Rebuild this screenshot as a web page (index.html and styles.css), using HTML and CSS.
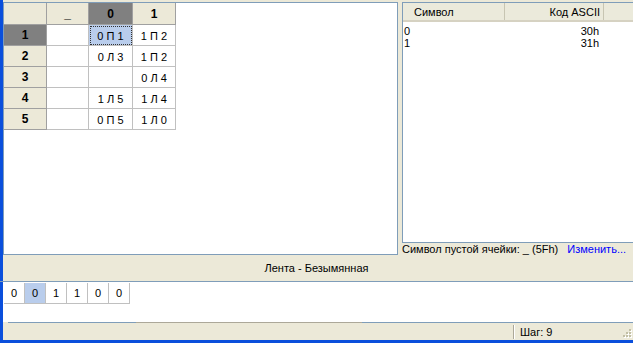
FILE: index.html
```html
<!DOCTYPE html>
<html>
<head>
<meta charset="utf-8">
<link rel="stylesheet" href="styles.css">
</head>
<body>
<div class="win">
  <div class="frame-l"></div>
  <div class="content">
    <div class="main">
      <div class="grid-pane">
        <div class="grid">
          <div class="hc corner"></div><div class="hc">_</div><div class="hc sel">0</div><div class="hc">1</div>
          <div class="rh sel">1</div><div class="cell"></div><div class="cell cur">0 П 1</div><div class="cell">1 П 2</div>
          <div class="rh">2</div><div class="cell"></div><div class="cell">0 Л 3</div><div class="cell">1 П 2</div>
          <div class="rh">3</div><div class="cell"></div><div class="cell"></div><div class="cell">0 Л 4</div>
          <div class="rh">4</div><div class="cell"></div><div class="cell">1 Л 5</div><div class="cell">1 Л 4</div>
          <div class="rh">5</div><div class="cell"></div><div class="cell">0 П 5</div><div class="cell">1 Л 0</div>
        </div>
      </div>
      <div class="side">
        <div class="list">
          <div class="list-head">
            <div class="lh lh1">Символ</div>
            <div class="lh lh2">Код ASCII</div>
            <div class="lh lh3"></div>
          </div>
          <div class="list-body">
            <div class="list-row"><span class="lc1">0</span><span class="lc2">30h</span></div>
            <div class="list-row"><span class="lc1">1</span><span class="lc2">31h</span></div>
          </div>
        </div>
        <div class="blank-label"><span>Символ пустой ячейки: _ (5Fh)</span><span class="link">Изменить...</span></div>
      </div>
    </div>
    <div class="tape-title">Лента - Безымянная</div>
    <div class="tape">
      <div class="tape-cells">
        <div class="tc">0</div><div class="tc cur">0</div><div class="tc">1</div><div class="tc">1</div><div class="tc">0</div><div class="tc">0</div>
      </div>
    </div>
    <div class="status-line"><div class="sl a"></div><div class="sl b"></div><div class="sl c"></div></div>
    <div class="status">
      <div class="st-main"></div>
      <div class="st-sep"></div>
      <div class="st-step">Шаг: 9</div>
      <div class="grip">
        <svg width="12" height="12" viewBox="0 0 12 12">
          <g fill="#ffffff">
            <rect x="9" y="2" width="2" height="2"/><rect x="6" y="5" width="2" height="2"/><rect x="9" y="5" width="2" height="2"/>
            <rect x="3" y="8" width="2" height="2"/><rect x="6" y="8" width="2" height="2"/><rect x="9" y="8" width="2" height="2"/>
          </g>
          <g fill="#c2bfa5">
            <rect x="8" y="1" width="2" height="2"/><rect x="5" y="4" width="2" height="2"/><rect x="8" y="4" width="2" height="2"/>
            <rect x="2" y="7" width="2" height="2"/><rect x="5" y="7" width="2" height="2"/><rect x="8" y="7" width="2" height="2"/>
          </g>
        </svg>
      </div>
    </div>
  </div>
</div>
<div class="frame-b"></div>
</body>
</html>
```
FILE: styles.css
```css
html, body {
  margin: 0;
  padding: 0;
}
body {
  width: 633px;
  height: 343px;
  overflow: hidden;
  background: #ece9d8;
  font-family: "Liberation Sans", Arial, sans-serif;
  font-size: 11px;
  color: #000;
}
.win {
  display: flex;
  height: 340px;
}
.frame-l {
  width: 3px;
  background: #0a4fdc;
  flex: none;
}
.content {
  flex: 1;
  display: flex;
  flex-direction: column;
  min-width: 0;
}
.main {
  display: flex;
  margin-top: 2px;
  height: 253px;
}
.grid-pane {
  width: 395px;
  flex: none;
  border: 1px solid #7f9db9;
  background: #fff;
  box-sizing: border-box;
}
.grid {
  display: grid;
  grid-template-columns: 43px 42px 44px 43px;
  grid-template-rows: 22px repeat(5, 21px);
  width: 172px;
}
.hc, .rh {
  background: #ece9d8;
  border-right: 1px solid #a0a0a0;
  border-bottom: 1px solid #a0a0a0;
  box-sizing: border-box;
  font-weight: bold;
  font-size: 12px;
  display: flex;
  align-items: center;
  justify-content: center;
}
.hc.sel, .rh.sel {
  background: #808080;
}
.cell {
  border-right: 1px solid #c0c0c0;
  border-bottom: 1px solid #c0c0c0;
  box-sizing: border-box;
  display: flex;
  align-items: center;
  justify-content: center;
  font-size: 11px;
  padding-top: 1px;
}
.cell.cur {
  background: #b9cdec;
  outline: 1px dotted #333;
  outline-offset: -2px;
}
.side {
  flex: 1;
  margin-left: 4px;
  display: flex;
  flex-direction: column;
}
.list {
  height: 241px;
  flex: none;
  border: 1px solid #7f9db9;
  border-right: none;
  background: #fff;
  box-sizing: border-box;
}
.list-head {
  display: flex;
  height: 19px;
  background: #ebeadb;
  border-bottom: 2px solid #d6d2c2;
  box-sizing: border-box;
}
.lh {
  display: flex;
  align-items: center;
  box-sizing: border-box;
  height: 17px;
}
.lh1 {
  width: 102px;
  padding-left: 11px;
  border-right: 1px solid #c7c5b2;
}
.lh2 {
  width: 99px;
  justify-content: flex-end;
  padding-right: 3px;
  border-right: 1px solid #c7c5b2;
}
.lh3 {
  flex: 1;
}
.list-body {
  padding-top: 3px;
}
.list-row {
  display: flex;
  height: 12px;
  line-height: 12px;
  padding-left: 1px;
}
.lc1 {
  width: 100px;
}
.lc2 {
  width: 95px;
  text-align: right;
}
.blank-label {
  height: 12px;
  line-height: 12px;
  display: flex;
  gap: 9px;
  white-space: nowrap;
}
.link {
  color: #0000ff;
}
.tape-title {
  height: 27px;
  display: flex;
  align-items: center;
  justify-content: center;
  margin-left: -3px;
  border-bottom: 1px solid #7f9db9;
  box-sizing: border-box;
  font-size: 11px;
}
.tape {
  height: 40px;
  background: #fff;
  box-sizing: border-box;
  padding-left: 1px;
  padding-top: 1px;
}
.tape-cells {
  display: flex;
}
.tc {
  width: 21px;
  height: 21px;
  box-sizing: border-box;
  border-right: 1px solid #c0c0c0;
  border-bottom: 1px solid #c0c0c0;
  display: flex;
  align-items: center;
  justify-content: center;
  font-size: 11px;
}
.tc.cur {
  background: #b9cdec;
}
.status-line {
  display: flex;
  height: 1px;
}
.sl.a {
  width: 128px;
  background: #7f9db9;
  margin-left: 5px;
}
.sl.b {
  width: 226px;
  background: #aca899;
}
.sl.c {
  flex: 1;
  background: #7f9db9;
}
.status {
  flex: 1;
  display: flex;
  align-items: center;
}
.st-main {
  width: 510px;
}
.st-sep {
  width: 1px;
  height: 14px;
  background: #aca899;
  border-right: 1px solid #fff;
}
.st-step {
  flex: 1;
  padding-left: 5px;
}
.grip {
  width: 12px;
  height: 12px;
  align-self: flex-end;
}
.frame-b {
  height: 3px;
  background: #0a4fdc;
}
```
